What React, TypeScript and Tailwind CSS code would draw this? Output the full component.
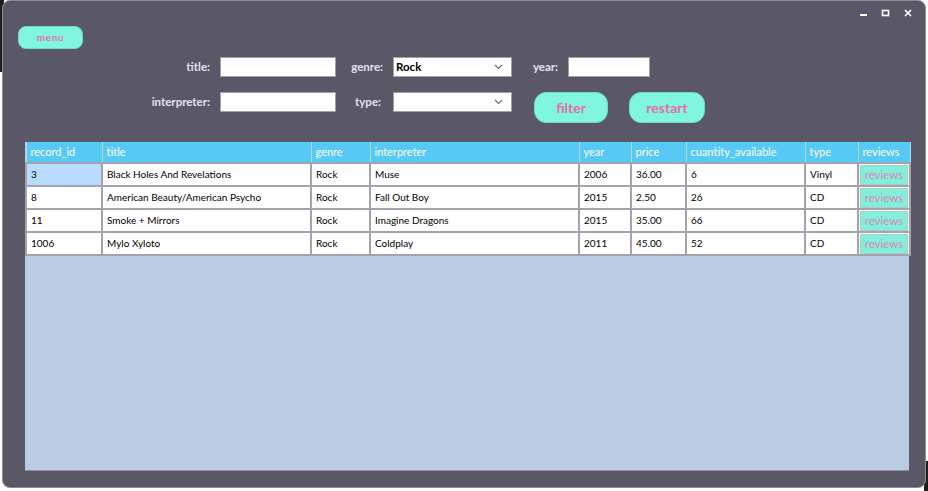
import React from 'react';

const columns = [
  { key: 'record_id', w: 'w-[76px]' },
  { key: 'title', w: 'w-[209px]' },
  { key: 'genre', w: 'w-[59px]' },
  { key: 'interpreter', w: 'w-[209px]' },
  { key: 'year', w: 'w-[52px]' },
  { key: 'price', w: 'w-[55px]' },
  { key: 'cuantity_available', w: 'w-[119px]' },
  { key: 'type', w: 'w-[53px]' },
  { key: 'reviews', w: 'w-[52px]' },
];

const records = [
  ['3', 'Black Holes And Revelations', 'Rock', 'Muse', '2006', '36.00', '6', 'Vinyl'],
  ['8', 'American Beauty/American Psycho', 'Rock', 'Fall Out Boy', '2015', '2.50', '26', 'CD'],
  ['11', 'Smoke + Mirrors', 'Rock', 'Imagine Dragons', '2015', '35.00', '66', 'CD'],
  ['1006', 'Mylo Xyloto', 'Rock', 'Coldplay', '2011', '45.00', '52', 'CD'],
];

const Chevron = () => (
  <svg width="9" height="6" viewBox="0 0 9 6" fill="none" stroke="#6b6b6b" strokeWidth="1.1">
    <polyline points="1 1 4.5 4.5 8 1" />
  </svg>
);

const Label = ({ text, w, pr = 'pr-[10px]' }: { text: string; w: string; pr?: string }) => (
  <div className={`${w} h-[20px] flex items-center justify-end ${pr} text-[11.5px] font-bold text-[#e4e3ee]`}>{text}</div>
);

const TextBox = ({ w }: { w: string }) => (
  <div className={`${w} h-[20px] bg-white border border-[#a09fa6]`} />
);

const Select = ({ value }: { value?: string }) => (
  <div className="w-[119px] h-[20px] bg-white border border-[#a09fa6] flex items-center justify-between pl-[2px] pr-[8px]">
    <span className="text-[11.5px] font-bold text-black">{value}</span>
    <Chevron />
  </div>
);

export default function App() {
  return (
    <div className="w-[928px] h-[491px] bg-white relative overflow-hidden" style={{ fontFamily: 'Lato, "Noto Sans", sans-serif' }}>
      <div className="absolute left-0 top-0 w-[4px] h-[72px] bg-[#1e1e1e]" />
      <div className="absolute right-0 bottom-0 w-[4px] h-[30px] bg-[#1e1e1e]" />
      <div className="relative ml-[2px] w-[924px] h-[488px] rounded-[8px] border border-[#8e8c99] bg-[#5a5767] flex flex-col">
        {/* title bar */}
        <div className="h-[25px] flex items-start justify-end pt-[8px] pr-[12px] gap-[12px]">
          <svg width="10" height="8" viewBox="0 0 10 8"><rect x="1" y="5" width="7" height="2" fill="#fff" /></svg>
          <svg width="10" height="8" viewBox="0 0 10 8"><rect x="1.5" y="1.5" width="6" height="5" fill="none" stroke="#fff" strokeWidth="1.6" /></svg>
          <svg width="10" height="8" viewBox="0 0 10 8"><path d="M2 1 L8 7 M8 1 L2 7" stroke="#fff" strokeWidth="1.6" /></svg>
        </div>

        {/* menu */}
        <div className="flex pl-[15px]">
          <button className="w-[65px] h-[23px] rounded-[8px] bg-[#80f5e0] border border-[#6fd8c8] text-[10px] font-bold tracking-[0.6px] text-[#e66ea4]">menu</button>
        </div>

        {/* filters */}
        <div className="mt-[8px] flex flex-col gap-[15px]">
          <div className="flex items-start">
            <Label text="title:" w="w-[217px]" />
            <TextBox w="w-[116px]" />
            <Label text="genre:" w="w-[57px]" />
            <Select value="Rock" />
            <Label text="year:" w="w-[56px]" />
            <TextBox w="w-[82px]" />
          </div>
          <div className="flex items-start">
            <Label text="interpreter:" w="w-[217px]" />
            <TextBox w="w-[116px]" />
            <Label text="type:" w="w-[57px]" pr="pr-[12px]" />
            <Select />
            <button className="ml-[22px] w-[74px] h-[31px] rounded-[12px] bg-[#80f5e0] border border-[#6fd8c8] text-[14px] font-bold text-[#e66ea4]">filter</button>
            <button className="ml-[21px] w-[76px] h-[31px] rounded-[12px] bg-[#80f5e0] border border-[#6fd8c8] text-[14px] font-bold text-[#e66ea4]">restart</button>
          </div>
        </div>

        {/* table */}
        <div className="mt-[19px] ml-[22px] w-[884px] h-[329px] bg-[#bacce4] border-b border-[#8a8fa0]">
          <table className="border-collapse table-fixed w-[884px]">
            <thead>
              <tr className="h-[21px] bg-[#56c9f7]">
                {columns.map((c) => (
                  <th key={c.key} className={`${c.w} border-x border-[#b7d6e6] px-[4px] text-left text-[11px] font-normal text-white`}>{c.key}</th>
                ))}
              </tr>
            </thead>
            <tbody>
              {records.map((r, i) => (
                <tr key={i} className="h-[23px] bg-white">
                  {r.map((v, j) => (
                    <td key={j} className={`border-2 border-[#a4a3ab] px-[4px] text-[10px] text-black whitespace-nowrap ${i === 0 && j === 0 ? 'bg-[#b8dcff]' : ''}`}>{v}</td>
                  ))}
                  <td className="border-2 border-[#a4a3ab] p-0">
                    <div className="mx-[1px] h-[20px] bg-[#80f0dd] border border-[#b5c9c4] flex items-center justify-center text-[11.5px] leading-none text-[#e283ad]">reviews</div>
                  </td>
                </tr>
              ))}
            </tbody>
          </table>
        </div>
      </div>
    </div>
  );
}
